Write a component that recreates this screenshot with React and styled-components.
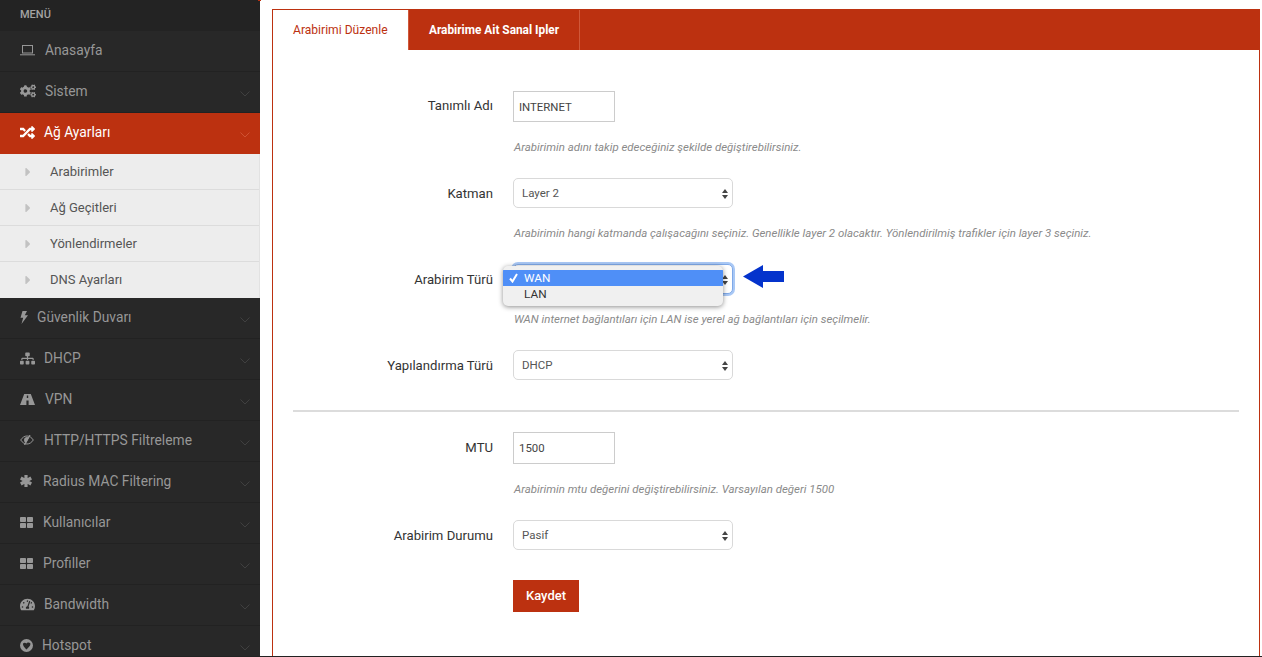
import React from "react";
import styled, { createGlobalStyle } from "styled-components";
import { FaCogs, FaRandom, FaSitemap, FaTachometerAlt, FaCaretRight } from "react-icons/fa";

const RED = "#bc3110";
const SIDE_BG = "#282828";

const GlobalStyle = createGlobalStyle`
  html, body {
    margin: 0;
    padding: 0;
    background: #fff;
    height: 657px;
    overflow: hidden;
  }
  * { box-sizing: border-box; }
`;

const Page = styled.div`
  position: relative;
  display: flex;
  width: 1262px;
  height: 657px;
  overflow: hidden;
  font-family: Roboto, "Liberation Sans", sans-serif;
  border-bottom: 1px solid #222;
  &::before {
    content: "";
    position: absolute;
    left: 258px;
    top: 0;
    width: 3px;
    height: 1px;
    background: ${RED};
  }
`;

const Sidebar = styled.aside`
  flex: 0 0 260px;
  width: 260px;
  background: ${SIDE_BG};
  overflow: hidden;
`;

const MenuTitle = styled.div`
  height: 31px;
  padding: 8px 0 0 20px;
  font-size: 11px;
  line-height: 13px;
  font-weight: 500;
  color: #a3a3a3;
  background: #232323;
`;

const NavRow = styled.div`
  display: flex;
  align-items: center;
  height: 41px;
  padding: 0 10px 2px 20px;
  font-size: 13.8px;
  color: ${({ $active }) => ($active ? "#fff" : "#979797")};
  background: ${({ $active }) => ($active ? RED : SIDE_BG)};
  border-bottom: 1px solid ${({ $active }) => ($active ? RED : "#222")};
`;

const NavIcon = styled.span`
  display: flex;
  align-items: center;
  width: ${({ $w }) => $w}px;
  flex: none;
  font-size: ${({ $size }) => $size || 14}px;
  color: ${({ $active }) => ($active ? "#fff" : "#979797")};
`;

const NavLabel = styled.span`
  flex: 1;
  white-space: nowrap;
`;

const Chevron = styled.svg`
  flex: none;
  width: 10px;
  height: 6px;
  margin-top: 6px;
  fill: none;
  stroke: ${({ $active }) => ($active ? "#cf5233" : "#404040")};
  stroke-width: 1;
`;

const SubMenu = styled.div`
  background: #ededed;
  border-right: 1px solid #e2e2e2;
`;

const SubRow = styled.div`
  display: flex;
  align-items: center;
  height: 36px;
  padding-left: 22px;
  font-size: 13px;
  color: #555;
  border-bottom: 1px solid #dcdcdc;
  &:last-child {
    border-bottom-color: transparent;
  }
`;

const SubCaret = styled.span`
  display: flex;
  width: 28px;
  flex: none;
  font-size: 14px;
  margin-left: -1px;
  margin-right: 1px;
  color: #c2c2c2;
`;

const Content = styled.main`
  flex: 1;
  padding: 9px 2px 0 12px;
`;

const Panel = styled.section`
  height: 660px;
  border: 1px solid ${RED};
  background: #fff;
`;

const Tabs = styled.nav`
  display: flex;
  height: 40px;
  background: ${RED};
`;

const Tab = styled.div`
  display: flex;
  align-items: center;
  width: ${({ $w }) => $w}px;
  padding-left: 20px;
  font-size: ${({ $active }) => ($active ? "12.1px" : "11.85px")};
  font-weight: ${({ $active }) => ($active ? 400 : 700)};
  color: ${({ $active }) => ($active ? RED : "#fff")};
  background: ${({ $active }) => ($active ? "#fff" : RED)};
  border-right: 1px solid #d0583a;
`;

const Form = styled.form`
  padding: 41px 20px 0 20px;
`;

const Row = styled.div`
  display: flex;
  align-items: center;
  margin-top: ${({ $mt }) => $mt || 0}px;
`;

const Label = styled.label`
  flex: none;
  width: 200px;
  padding-bottom: ${({ $up }) => ($up ? 2 : 0)}px;
  text-align: right;
  font-size: 13.15px;
  color: #333;
`;

const Input = styled.input`
  display: block;
  width: 102px;
  height: ${({ $h }) => $h}px;
  margin-left: 20px;
  padding: 0 5px;
  font: 11.4px Roboto, "Liberation Sans", sans-serif;
  color: #444;
  background: #fff;
  border: 1px solid #ccc;
  border-radius: 0;
  outline: 0;
`;

const SelectBox = styled.div`
  position: relative;
  display: flex;
  align-items: center;
  width: 220px;
  height: 30px;
  margin-left: 20px;
  padding: 0 8px;
  font-size: 11.5px;
  color: #555;
  background: #fff;
  border: 1px solid ${({ $focus }) => ($focus ? "#7fa9e8" : "#d9d9d9")};
  border-radius: 5px;
  box-shadow: ${({ $focus }) => ($focus ? "0 0 0 2px #a9c8f5" : "none")};
`;

const Updown = styled.svg`
  position: absolute;
  right: 3px;
  top: 9px;
  width: 8px;
  height: 12px;
  fill: #444;
`;

const Help = styled.p`
  margin: ${({ $mt }) => $mt}px 0 0 221px;
  font-size: 11.46px;
  line-height: 13px;
  font-style: italic;
  color: #8a8a8a;
`;

const Divider = styled.hr`
  height: 2px;
  margin: 30px 0 20px;
  border: 0;
  background: #dcdcdc;
`;

const SaveButton = styled.button`
  display: block;
  width: 66px;
  height: 32px;
  margin: 30px 0 0 220px;
  padding: 0 0 2px;
  font: 500 13px Roboto, "Liberation Sans", sans-serif;
  color: #fff;
  background: ${RED};
  border: 0;
`;

const Dropdown = styled.ul`
  position: absolute;
  left: 503px;
  top: 266px;
  width: 220px;
  height: 40px;
  margin: 0;
  padding: 4px 0;
  list-style: none;
  font-size: 11.8px;
  background: #f0f0f0;
  border-radius: 5px;
  box-shadow: 0 1px 5px rgba(0, 0, 0, 0.45);
  overflow: hidden;
`;

const DropItem = styled.li`
  position: relative;
  height: 16px;
  padding-left: 21px;
  line-height: 16px;
  color: ${({ $sel }) => ($sel ? "#fff" : "#333")};
  background: ${({ $sel }) => ($sel ? "#4f8ff7" : "transparent")};
`;

const Check = styled.svg`
  position: absolute;
  left: 6px;
  top: 3px;
  width: 9px;
  height: 10px;
  fill: none;
  stroke: #fff;
  stroke-width: 2;
`;

const Arrow = styled.svg`
  position: absolute;
  left: 743px;
  top: 265px;
  width: 41px;
  height: 23px;
  fill: #0433cc;
`;

// font awesome 4 style glyphs that the icon packages draw differently
const LaptopIcon = () => (
  <svg width="15" height="11" viewBox="0 0 15 11" fill="none" stroke="currentColor">
    <rect x="2.5" y="0.5" width="10" height="7.5" />
    <path d="M0 9.8h15" />
  </svg>
);

const BoltIcon = () => (
  <svg width="8" height="13" viewBox="0 0 8 13" fill="currentColor">
    <path d="M2.5 0H7L4.8 4.2H8L1.5 13L3.2 6.8H0.5Z" />
  </svg>
);

const RoadIcon = () => (
  <svg width="15" height="11" viewBox="0 0 15 11" fill="currentColor">
    <path
      fillRule="evenodd"
      d="M4.2 0H10.8L15 11H0ZM6.8 1.5V4H8.2V1.5ZM6.4 6.5V11H8.6V6.5Z"
    />
  </svg>
);

const EyeSlashIcon = () => (
  <svg width="14" height="10" viewBox="0 0 14 10" fill="none" stroke="currentColor">
    <path d="M.7 5C2.5 2.3 4.6 1 7 1s4.5 1.3 6.3 4C11.5 7.7 9.4 9 7 9S2.5 7.7.7 5z" />
    <path d="M4 5a3 3 0 0 1 5-2.2L6 8A3 3 0 0 1 4 5z" fill="currentColor" stroke="none" />
    <path d="M10 0L4.5 10" strokeWidth="1.2" />
  </svg>
);

const AsteriskIcon = () => (
  <svg width="12" height="12" viewBox="0 0 12 12" fill="none" stroke="currentColor" strokeWidth="3.2">
    <path d="M6 0v12M.8 3l10.4 6M.8 9l10.4-6" />
  </svg>
);

const GridIcon = () => (
  <svg width="13" height="11" viewBox="0 0 13 11" fill="currentColor">
    <rect x="0" y="0" width="6" height="5" rx="0.8" />
    <rect x="7" y="0" width="6" height="5" rx="0.8" />
    <rect x="0" y="6" width="6" height="5" rx="0.8" />
    <rect x="7" y="6" width="6" height="5" rx="0.8" />
  </svg>
);

const GlobeIcon = () => (
  <svg width="13" height="13" viewBox="0 0 13 13">
    <circle cx="6.5" cy="6.5" r="6.5" fill="currentColor" />
    <path d="M3 4.5C4.5 3 5.7 3.8 6.3 4.6C7 3.6 9 2.8 10.3 4.3C11 6.5 8.2 8.8 6.6 10.5C5 9 2.6 6.5 3 4.5Z" fill={SIDE_BG} />
  </svg>
);

const menuTop = [
  { label: "Anasayfa", w: 25, plain: true, icon: <LaptopIcon /> },
  { label: "Sistem", w: 25, size: 16, icon: <FaCogs /> },
];

const menuRest = [
  { label: "Güvenlik Duvarı", w: 17, icon: <BoltIcon /> },
  { label: "DHCP", w: 24, size: 15, icon: <FaSitemap /> },
  { label: "VPN", w: 25, icon: <RoadIcon /> },
  { label: "HTTP/HTTPS Filtreleme", w: 24, icon: <EyeSlashIcon /> },
  { label: "Radius MAC Filtering", w: 23, icon: <AsteriskIcon /> },
  { label: "Kullanıcılar", w: 23, icon: <GridIcon /> },
  { label: "Profiller", w: 23, icon: <GridIcon /> },
  { label: "Bandwidth", w: 24, size: 15, icon: <FaTachometerAlt /> },
  { label: "Hotspot", w: 22, icon: <GlobeIcon /> },
];

const subItems = ["Arabirimler", "Ağ Geçitleri", "Yönlendirmeler", "DNS Ayarları"];

const NavItem = ({ item, active }) => {
  const { label, w, size, icon, plain } = item;
  return (
    <NavRow $active={active}>
      <NavIcon $w={w} $size={size} $active={active}>
        {icon}
      </NavIcon>
      <NavLabel>{label}</NavLabel>
      {!plain && (
        <Chevron viewBox="0 0 10 6" $active={active}>
          <path d="M0.5 0.5L5 5L9.5 0.5" />
        </Chevron>
      )}
    </NavRow>
  );
};

const FakeSelect = ({ value, focus }) => (
  <SelectBox $focus={focus}>
    {value}
    <Updown viewBox="0 0 8 12">
      <path d="M4 1L7 5H1zM4 11L1 7h6z" />
    </Updown>
  </SelectBox>
);

const App = () => (
  <Page>
    <GlobalStyle />
    <Sidebar>
      <MenuTitle>MENÜ</MenuTitle>
      {menuTop.map((m) => (
        <NavItem key={m.label} item={m} />
      ))}
      <NavItem item={{ label: "Ağ Ayarları", w: 24, size: 15, icon: <FaRandom /> }} active />
      <SubMenu>
        {subItems.map((s) => (
          <SubRow key={s}>
            <SubCaret>
              <FaCaretRight />
            </SubCaret>
            {s}
          </SubRow>
        ))}
      </SubMenu>
      {menuRest.map((m) => (
        <NavItem key={m.label} item={m} />
      ))}
    </Sidebar>
    <Content>
      <Panel>
        <Tabs>
          <Tab $active $w={136}>Arabirimi Düzenle</Tab>
          <Tab $w={171}>Arabirime Ait Sanal Ipler</Tab>
        </Tabs>
        <Form>
          <Row>
            <Label $up>Tanımlı Adı</Label>
            <Input $h={31} defaultValue="INTERNET" />
          </Row>
          <Help $mt={19}>Arabirimin adını takip edeceğiniz şekilde değiştirebilirsiniz.</Help>
          <Row $mt={24}>
            <Label>Katman</Label>
            <FakeSelect value="Layer 2" />
          </Row>
          <Help $mt={19}>
            Arabirimin hangi katmanda çalışacağını seçiniz. Genellikle layer 2 olacaktır. Yönlendirilmiş trafikler için layer 3 seçiniz.
          </Help>
          <Row $mt={24}>
            <Label>Arabirim Türü</Label>
            <FakeSelect focus />
          </Row>
          <Help $mt={19}>WAN internet bağlantıları için LAN ise yerel ağ bağlantıları için seçilmelir.</Help>
          <Row $mt={24}>
            <Label>Yapılandırma Türü</Label>
            <FakeSelect value="DHCP" />
          </Row>
          <Divider />
          <Row>
            <Label $up>MTU</Label>
            <Input $h={32} defaultValue="1500" />
          </Row>
          <Help $mt={19}>Arabirimin mtu değerini değiştirebilirsiniz. Varsayılan değeri 1500</Help>
          <Row $mt={24}>
            <Label>Arabirim Durumu</Label>
            <FakeSelect value="Pasif" />
          </Row>
          <SaveButton type="button">Kaydet</SaveButton>
        </Form>
      </Panel>
    </Content>
    <Dropdown>
      <DropItem $sel>
        <Check viewBox="0 0 9 10">
          <path d="M1 5.5L3.5 8.5L8 1" />
        </Check>
        WAN
      </DropItem>
      <DropItem>LAN</DropItem>
    </Dropdown>
    <Arrow viewBox="0 0 41 23">
      <path d="M0 11.5L20 0V6H41V17H20V23Z" />
    </Arrow>
  </Page>
);

export default App;
